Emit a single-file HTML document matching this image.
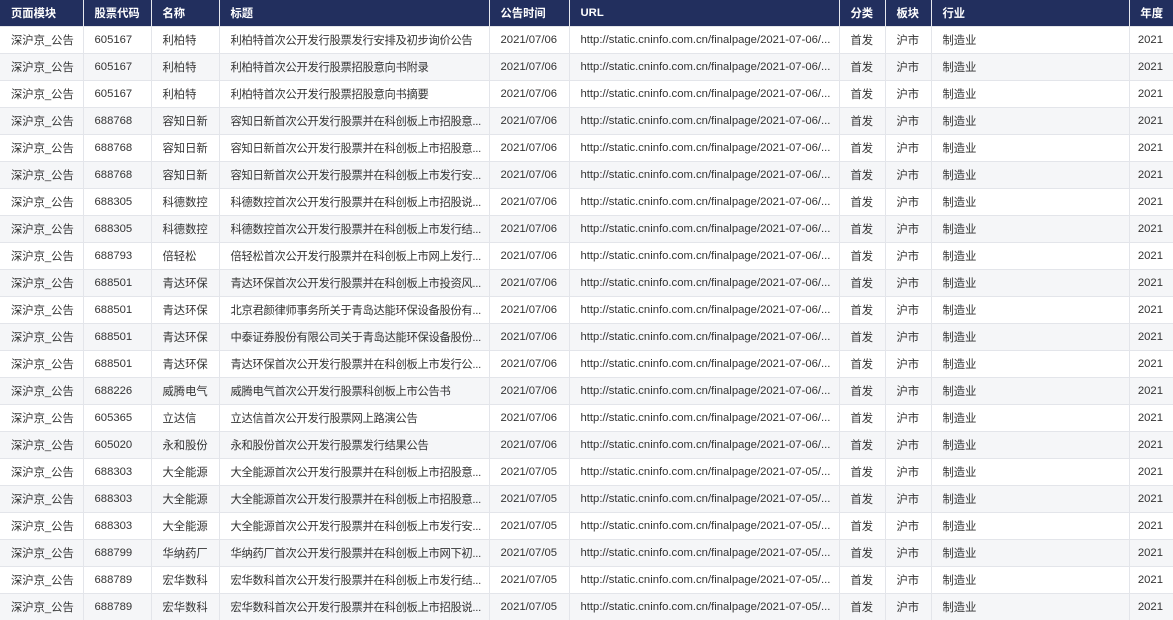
<!DOCTYPE html>
<html><head><meta charset="utf-8"><style>
*{margin:0;padding:0;box-sizing:border-box}
body{width:1173px;height:620px;overflow:hidden;background:#fff;font-family:"Liberation Sans","Noto Sans CJK SC",sans-serif;font-size:11.3px;color:#333}
table{border-collapse:collapse;table-layout:fixed;width:1173px}
th{background:#222f5e;color:#fff;font-weight:bold;height:26px;text-align:left;padding:0 0 0 11px;border-right:1px solid #e6e8ee;white-space:nowrap;overflow:visible}
td{height:27px;padding:0 0 0 11px;border-right:1px solid #e3e5ea;border-top:1px solid #e3e5ea;white-space:nowrap;overflow:visible}
td:nth-child(4),td:nth-child(6){overflow:hidden;text-overflow:clip;padding-right:2px}
td:nth-child(4){letter-spacing:-0.3px}
tr:nth-child(even) td{background:#f5f6f8}
th:last-child,td:last-child{text-align:right;border-right:none;padding-right:10px;padding-left:0}
</style></head><body>
<table>
<colgroup><col style="width:83px"><col style="width:68px"><col style="width:68px"><col style="width:270px"><col style="width:80px"><col style="width:270px"><col style="width:46px"><col style="width:46px"><col style="width:198px"><col style="width:44px"></colgroup>
<thead><tr><th>页面模块</th><th>股票代码</th><th>名称</th><th>标题</th><th>公告时间</th><th>URL</th><th>分类</th><th>板块</th><th>行业</th><th>年度</th></tr></thead>
<tbody>
<tr><td>深沪京_公告</td><td>605167</td><td>利柏特</td><td>利柏特首次公开发行股票发行安排及初步询价公告</td><td>2021/07/06</td><td>http://static.cninfo.com.cn/finalpage/2021-07-06/...</td><td>首发</td><td>沪市</td><td>制造业</td><td>2021</td></tr>
<tr><td>深沪京_公告</td><td>605167</td><td>利柏特</td><td>利柏特首次公开发行股票招股意向书附录</td><td>2021/07/06</td><td>http://static.cninfo.com.cn/finalpage/2021-07-06/...</td><td>首发</td><td>沪市</td><td>制造业</td><td>2021</td></tr>
<tr><td>深沪京_公告</td><td>605167</td><td>利柏特</td><td>利柏特首次公开发行股票招股意向书摘要</td><td>2021/07/06</td><td>http://static.cninfo.com.cn/finalpage/2021-07-06/...</td><td>首发</td><td>沪市</td><td>制造业</td><td>2021</td></tr>
<tr><td>深沪京_公告</td><td>688768</td><td>容知日新</td><td>容知日新首次公开发行股票并在科创板上市招股意...</td><td>2021/07/06</td><td>http://static.cninfo.com.cn/finalpage/2021-07-06/...</td><td>首发</td><td>沪市</td><td>制造业</td><td>2021</td></tr>
<tr><td>深沪京_公告</td><td>688768</td><td>容知日新</td><td>容知日新首次公开发行股票并在科创板上市招股意...</td><td>2021/07/06</td><td>http://static.cninfo.com.cn/finalpage/2021-07-06/...</td><td>首发</td><td>沪市</td><td>制造业</td><td>2021</td></tr>
<tr><td>深沪京_公告</td><td>688768</td><td>容知日新</td><td>容知日新首次公开发行股票并在科创板上市发行安...</td><td>2021/07/06</td><td>http://static.cninfo.com.cn/finalpage/2021-07-06/...</td><td>首发</td><td>沪市</td><td>制造业</td><td>2021</td></tr>
<tr><td>深沪京_公告</td><td>688305</td><td>科德数控</td><td>科德数控首次公开发行股票并在科创板上市招股说...</td><td>2021/07/06</td><td>http://static.cninfo.com.cn/finalpage/2021-07-06/...</td><td>首发</td><td>沪市</td><td>制造业</td><td>2021</td></tr>
<tr><td>深沪京_公告</td><td>688305</td><td>科德数控</td><td>科德数控首次公开发行股票并在科创板上市发行结...</td><td>2021/07/06</td><td>http://static.cninfo.com.cn/finalpage/2021-07-06/...</td><td>首发</td><td>沪市</td><td>制造业</td><td>2021</td></tr>
<tr><td>深沪京_公告</td><td>688793</td><td>倍轻松</td><td>倍轻松首次公开发行股票并在科创板上市网上发行...</td><td>2021/07/06</td><td>http://static.cninfo.com.cn/finalpage/2021-07-06/...</td><td>首发</td><td>沪市</td><td>制造业</td><td>2021</td></tr>
<tr><td>深沪京_公告</td><td>688501</td><td>青达环保</td><td>青达环保首次公开发行股票并在科创板上市投资风...</td><td>2021/07/06</td><td>http://static.cninfo.com.cn/finalpage/2021-07-06/...</td><td>首发</td><td>沪市</td><td>制造业</td><td>2021</td></tr>
<tr><td>深沪京_公告</td><td>688501</td><td>青达环保</td><td>北京君颜律师事务所关于青岛达能环保设备股份有...</td><td>2021/07/06</td><td>http://static.cninfo.com.cn/finalpage/2021-07-06/...</td><td>首发</td><td>沪市</td><td>制造业</td><td>2021</td></tr>
<tr><td>深沪京_公告</td><td>688501</td><td>青达环保</td><td>中泰证券股份有限公司关于青岛达能环保设备股份...</td><td>2021/07/06</td><td>http://static.cninfo.com.cn/finalpage/2021-07-06/...</td><td>首发</td><td>沪市</td><td>制造业</td><td>2021</td></tr>
<tr><td>深沪京_公告</td><td>688501</td><td>青达环保</td><td>青达环保首次公开发行股票并在科创板上市发行公...</td><td>2021/07/06</td><td>http://static.cninfo.com.cn/finalpage/2021-07-06/...</td><td>首发</td><td>沪市</td><td>制造业</td><td>2021</td></tr>
<tr><td>深沪京_公告</td><td>688226</td><td>威腾电气</td><td>威腾电气首次公开发行股票科创板上市公告书</td><td>2021/07/06</td><td>http://static.cninfo.com.cn/finalpage/2021-07-06/...</td><td>首发</td><td>沪市</td><td>制造业</td><td>2021</td></tr>
<tr><td>深沪京_公告</td><td>605365</td><td>立达信</td><td>立达信首次公开发行股票网上路演公告</td><td>2021/07/06</td><td>http://static.cninfo.com.cn/finalpage/2021-07-06/...</td><td>首发</td><td>沪市</td><td>制造业</td><td>2021</td></tr>
<tr><td>深沪京_公告</td><td>605020</td><td>永和股份</td><td>永和股份首次公开发行股票发行结果公告</td><td>2021/07/06</td><td>http://static.cninfo.com.cn/finalpage/2021-07-06/...</td><td>首发</td><td>沪市</td><td>制造业</td><td>2021</td></tr>
<tr><td>深沪京_公告</td><td>688303</td><td>大全能源</td><td>大全能源首次公开发行股票并在科创板上市招股意...</td><td>2021/07/05</td><td>http://static.cninfo.com.cn/finalpage/2021-07-05/...</td><td>首发</td><td>沪市</td><td>制造业</td><td>2021</td></tr>
<tr><td>深沪京_公告</td><td>688303</td><td>大全能源</td><td>大全能源首次公开发行股票并在科创板上市招股意...</td><td>2021/07/05</td><td>http://static.cninfo.com.cn/finalpage/2021-07-05/...</td><td>首发</td><td>沪市</td><td>制造业</td><td>2021</td></tr>
<tr><td>深沪京_公告</td><td>688303</td><td>大全能源</td><td>大全能源首次公开发行股票并在科创板上市发行安...</td><td>2021/07/05</td><td>http://static.cninfo.com.cn/finalpage/2021-07-05/...</td><td>首发</td><td>沪市</td><td>制造业</td><td>2021</td></tr>
<tr><td>深沪京_公告</td><td>688799</td><td>华纳药厂</td><td>华纳药厂首次公开发行股票并在科创板上市网下初...</td><td>2021/07/05</td><td>http://static.cninfo.com.cn/finalpage/2021-07-05/...</td><td>首发</td><td>沪市</td><td>制造业</td><td>2021</td></tr>
<tr><td>深沪京_公告</td><td>688789</td><td>宏华数科</td><td>宏华数科首次公开发行股票并在科创板上市发行结...</td><td>2021/07/05</td><td>http://static.cninfo.com.cn/finalpage/2021-07-05/...</td><td>首发</td><td>沪市</td><td>制造业</td><td>2021</td></tr>
<tr><td>深沪京_公告</td><td>688789</td><td>宏华数科</td><td>宏华数科首次公开发行股票并在科创板上市招股说...</td><td>2021/07/05</td><td>http://static.cninfo.com.cn/finalpage/2021-07-05/...</td><td>首发</td><td>沪市</td><td>制造业</td><td>2021</td></tr>
</tbody></table>
</body></html>
